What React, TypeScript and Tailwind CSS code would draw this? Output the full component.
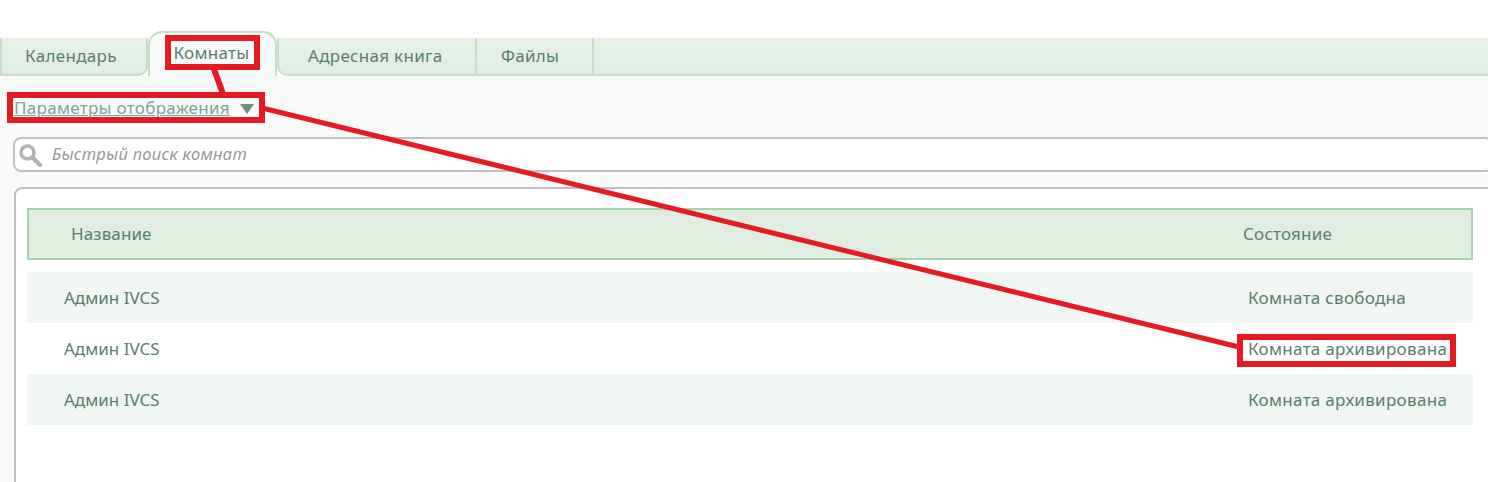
const rows = [
  { name: "Админ IVCS", state: "Комната свободна", striped: true },
  { name: "Админ IVCS", state: "Комната архивирована", striped: false },
  { name: "Админ IVCS", state: "Комната архивирована", striped: true },
];

export default function App() {
  return (
    <div className="relative h-[482px] w-[1488px] overflow-hidden bg-white font-['Noto_Sans',sans-serif] text-[17px] tracking-[0.3px] text-[#5a7d70]">
      <div className="h-[31px]" />

      {/* Tabs */}
      <div className="flex h-[45px]">
        <div className="mt-[7px] flex w-[148px] items-center rounded-br-[10px] border-r-2 border-b-2 border-l-2 border-[#c5e0c8] bg-gradient-to-b from-[#e7f2e9] to-[#dfeee1] pl-[23px]">
          Календарь
        </div>
        <div className="flex w-[129px] items-center justify-center rounded-t-[14px] border-2 border-b-0 border-[#c5e0c8] bg-[#f8faf9] pr-[2px] pb-[3px]">
          Комнаты
        </div>
        <div className="mt-[7px] flex w-[198px] items-center rounded-bl-[10px] border-b-2 border-l-2 border-[#c5e0c8] bg-gradient-to-b from-[#e7f2e9] to-[#dfeee1] pl-[29px]">
          Адресная книга
        </div>
        <div className="mt-[7px] flex w-[117px] items-center border-b-2 border-l-2 border-[#c5e0c8] bg-gradient-to-b from-[#e7f2e9] to-[#dfeee1] pl-[24px]">
          Файлы
        </div>
        <div className="mt-[7px] flex-1 border-b-2 border-l-2 border-[#c5e0c8] bg-gradient-to-b from-[#e7f2e9] to-[#dfeee1]" />
      </div>

      {/* Content */}
      <div className="h-[406px] rounded-tl-[8px] bg-[#f8faf9] pl-[14px]">
        <div className="flex h-[61px] items-start pt-[19px]">
          <a className="text-[#7ea597] underline">Параметры отображения</a>
          <svg width="14" height="10" viewBox="0 0 14 10" className="mt-[9px] ml-[10px]">
            <path d="M0 0H14L7 10Z" fill="#6f8f82" />
          </svg>
        </div>

        <div className="-ml-px flex h-[35px] w-[1480px] items-center rounded-[8px] border-2 border-[#c0c0c0] bg-white">
          <svg width="24" height="24" viewBox="0 0 24 24" className="ml-[3px]">
            <circle cx="9.5" cy="9.5" r="6.5" fill="none" stroke="#b2b2b2" strokeWidth="3.5" />
            <path d="M14.5 14.5L22 22" stroke="#b2b2b2" strokeWidth="4.5" strokeLinecap="round" />
          </svg>
          <span className="ml-[10px] text-[16.5px] text-[#969a98] italic">Быстрый поиск комнат</span>
        </div>

        <div className="mt-[15px] h-[320px] w-[1480px] rounded-t-[8px] border-2 border-[#c0c0c0] bg-white pt-[19px] pl-[11px]">
          <div className="flex h-[52px] w-[1446px] items-center border-2 border-[#a6d4a9] bg-[#e0eee2] pl-[42px]">
            <span className="w-[1172px] tracking-[0.1px]">Название</span>
            <span className="tracking-[0.2px]">Состояние</span>
          </div>
          <div className="mt-[12px]">
            {rows.map((row, i) => (
              <div
                key={i}
                className={`flex h-[51px] w-[1446px] items-center pl-[37px] ${row.striped ? "bg-[#f0f6f1]" : "bg-white"}`}
              >
                <span className="w-[1184px] tracking-normal">{row.name}</span>
                <span>{row.state}</span>
              </div>
            ))}
          </div>
        </div>
      </div>

      {/* Red annotation marks */}
      <svg width="1488" height="482" className="pointer-events-none absolute top-0 left-0">
        <g fill="none" stroke="#e41b23" strokeWidth="6">
          <rect x="168" y="38" width="89" height="29" />
          <rect x="10" y="95" width="252" height="25" />
          <rect x="1240" y="337" width="213" height="27" />
          <path d="M214 69L223 94" />
          <path d="M262 108L1239 347" strokeWidth="5" />
        </g>
      </svg>
    </div>
  );
}
